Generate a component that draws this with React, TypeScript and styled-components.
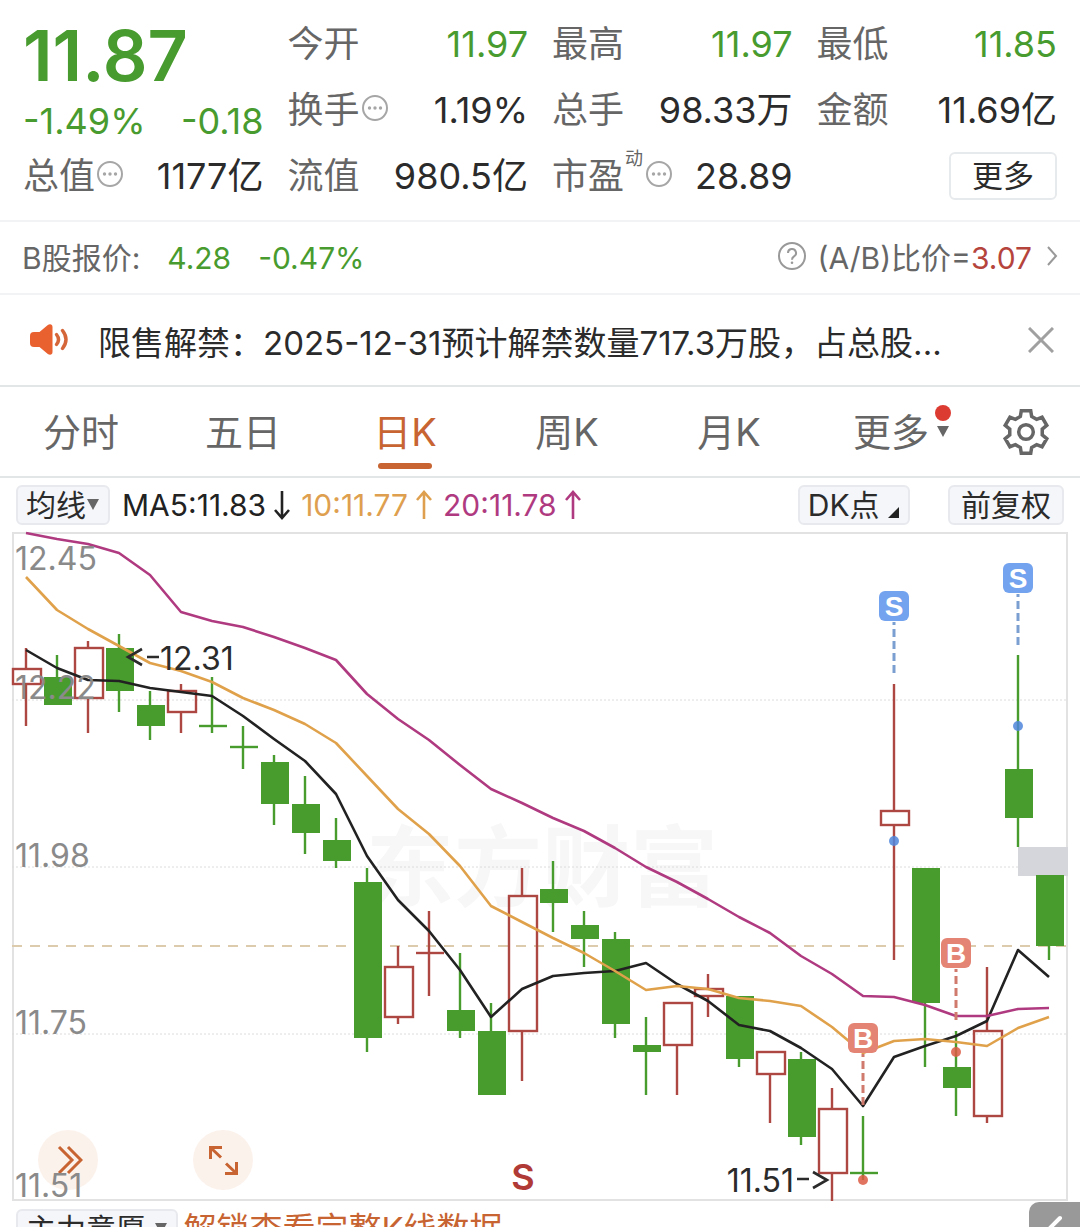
import React from "react";
import styled, { createGlobalStyle, css } from "styled-components";

const GREEN = "#489b2e";
const RED = "#b5443c";
const CANDLE_RED = "#ad4742";
const ORANGE = "#c76432";
const INK = "#2b2b2b";
const MUTED = "#666666";

const GlobalStyle = createGlobalStyle`
  *, *::before, *::after { box-sizing: border-box; }
  body {
    margin: 0;
    background: #ffffff;
    color: ${INK};
    font-family: Inter, "Noto Sans CJK SC", sans-serif;
    font-size: 36px;
  }
  button {
    margin: 0;
    padding: 0;
    border: 0;
    background: none;
    color: inherit;
    font: inherit;
    cursor: pointer;
  }
  a { color: inherit; text-decoration: none; }
  svg { display: block; flex: none; }
`;

const Page = styled.div`
  display: flex;
  flex-direction: column;
  height: 100vh;
  overflow: hidden;
  white-space: nowrap;

  > * {
    flex: none;
  }
`;

/* ---------- quote summary ---------- */

const Summary = styled.section`
  display: grid;
  grid-template-columns: repeat(4, 1fr);
  column-gap: 24px;
  padding: 11px 23px;
  border-bottom: 2px solid #f2f3f4;
`;

const Column = styled.div`
  display: flex;
  flex-direction: column;
  min-width: 0;
`;

const Price = styled.strong`
  height: 89px;
  color: ${GREEN};
  font-size: 70px;
  font-weight: 600;
  line-height: 89px;
`;

const Change = styled.div`
  display: flex;
  justify-content: space-between;
  height: 43px;
  color: ${GREEN};
  line-height: 43px;
`;

const Field = styled.div`
  display: flex;
  align-items: center;
  height: 66px;
  line-height: 66px;

  > svg {
    margin: 0 0 4px 1px;
  }
`;

const FieldName = styled.span`
  color: ${MUTED};
`;

const FieldValue = styled.span<{ $color?: string }>`
  margin-left: auto;
  color: ${(p) => p.$color ?? INK};
`;

const Sup = styled.sup`
  align-self: flex-start;
  margin: 6px 1px 0;
  color: ${MUTED};
  font-size: 18px;
  line-height: 20px;
`;

const MoreButton = styled.button`
  height: 48px;
  margin-left: auto;
  padding: 0 21px;
  border: 2px solid #e7eaec;
  border-radius: 6px;
  font-size: 31px;
  line-height: 44px;
`;

/* ---------- B share row ---------- */

const BShare = styled.section`
  display: flex;
  align-items: center;
  justify-content: space-between;
  height: 73px;
  padding: 0 22px 4px;
  border-bottom: 2px solid #f2f3f4;
  color: ${MUTED};
  font-size: 30px;
`;

const Inline = styled.div`
  display: flex;
  align-items: baseline;
  gap: 27px;
`;

const RatioLink = styled.a`
  display: flex;
  align-items: center;
  gap: 10px;
`;

const Tint = styled.span<{ $color: string }>`
  color: ${(p) => p.$color};
`;

/* ---------- notice ---------- */

const Notice = styled.section`
  display: flex;
  align-items: center;
  height: 92px;
  padding: 0 26px 0 29px;
  border-bottom: 2px solid #e3e6e7;
`;

const NoticeText = styled.p`
  flex: 1;
  min-width: 0;
  margin: 6px 0 0 29px;
  overflow: hidden;
  font-size: 33px;
  line-height: 48px;
`;

/* ---------- period tabs ---------- */

const Tabs = styled.nav`
  display: grid;
  grid-template-columns: repeat(6, 3fr) 2fr;
  height: 91px;
  border-bottom: 2px solid #e3e6e7;
`;

const Tab = styled.button<{ $active?: boolean }>`
  display: flex;
  align-items: center;
  justify-content: center;
  padding-bottom: 4px;
  color: ${MUTED};
  font-size: 38px;
  ${(p) =>
    p.$active &&
    css`
      position: relative;
      color: ${ORANGE};
      &::after {
        content: "";
        position: absolute;
        bottom: 7px;
        left: calc(50% - 27px);
        width: 54px;
        height: 6px;
        border-radius: 3px;
        background: ${ORANGE};
      }
    `}
`;

const SettingsButton = styled.button`
  display: grid;
  place-items: center;
`;

const TabLabel = styled.span`
  position: relative;
`;

const TabMark = styled.svg`
  position: absolute;
  top: 3px;
  left: calc(100% + 5px);
`;

/* ---------- indicator bar ---------- */

const Toolbar = styled.section`
  display: flex;
  align-items: center;
  height: 54px;
  padding: 0 16px;
`;

const Chip = styled.button<{ $wide?: boolean }>`
  display: flex;
  align-items: center;
  height: 40px;
  padding: 0 ${(p) => (p.$wide ? 11 : 8)}px;
  border: 2px solid #e7e9ee;
  border-radius: 6px;
  background: #f5f6f9;
  font-size: 30px;
  line-height: 36px;
`;

const Averages = styled.div`
  display: flex;
  gap: 10px;
  margin-left: 12px;
  font-size: 30px;
`;

const Average = styled.span<{ $color: string }>`
  display: flex;
  align-items: center;
  gap: 7px;
  color: ${(p) => p.$color};
`;

const ChipGroup = styled.div`
  display: flex;
  gap: 38px;
  margin-left: auto;
`;

/* ---------- chart ---------- */

const ChartArea = styled.section`
  position: relative;
  margin: 0 12px;
`;

const Plot = styled.svg`
  position: relative;
  z-index: 1;
  width: 100%;
  height: auto;
  overflow: visible;
  pointer-events: none;
`;

const RoundButton = styled.button<{ $left: number }>`
  position: absolute;
  bottom: 11px;
  left: ${(p) => p.$left}px;
  display: grid;
  place-items: center;
  width: 60px;
  height: 60px;
  border-radius: 50%;
  background: #fcf2ec;
`;

/* ---------- lower panel ---------- */

const Lower = styled.section`
  position: relative;
  display: flex;
  align-items: flex-start;
  gap: 5px;
  padding: 8px 16px;
`;

const Unlock = styled.a`
  color: ${ORANGE};
  font-size: 33px;
  line-height: 40px;
`;

const BackButton = styled.button`
  position: absolute;
  top: 1px;
  right: 0;
  display: grid;
  place-items: center;
  width: 51px;
  height: 50px;
  border-radius: 10px 0 0 0;
  background: #999999;
`;

/* ---------- icons ---------- */

const DotsIcon = () => (
  <svg width="28" height="28" viewBox="0 0 28 28" fill="#a6a6a6" aria-hidden="true">
    <circle cx="14" cy="14" r="12" fill="none" stroke="#a6a6a6" strokeWidth="2" />
    <circle cx="8.500" cy="14" r="1.700" />
    <circle cx="14" cy="14" r="1.700" />
    <circle cx="19.500" cy="14" r="1.700" />
  </svg>
);

const HelpIcon = () => (
  <svg width="30" height="30" viewBox="0 0 30 30" fill="none" stroke="#999" strokeWidth="2" aria-hidden="true">
    <circle cx="15" cy="15" r="13" />
    <path d="M11 12a4 4 0 1 1 6 3.400c-1.500 1-2 1.600-2 3.400" />
    <circle cx="15" cy="21.800" r="1.300" fill="#999" stroke="none" />
  </svg>
);

const ChevronIcon = () => (
  <svg width="16" height="22" viewBox="0 0 16 22" fill="none" stroke="#999" strokeWidth="2" aria-hidden="true">
    <path d="M6 2l8 9-8 9" />
  </svg>
);

const SpeakerIcon = () => (
  <svg width="40" height="34" viewBox="0 0 40 34" aria-hidden="true">
    <path
      d="M5 9h5.500L18.500 2.200c2.500-1.800 5-1 5 1.800v25c0 2.800-2.500 3.600-5 1.800L10.500 24H5c-2.800 0-4-1.200-4-4v-7c0-2.800 1.200-4 4-4z"
      fill="#ea6130"
    />
    <path d="M27.500 11.500q4 5 0 10" fill="none" stroke="#d5663a" strokeWidth="3.400" strokeLinecap="round" />
    <path d="M33.500 7.500q7 9 0 18" fill="none" stroke="#d5663a" strokeWidth="3.400" strokeLinecap="round" />
  </svg>
);

const CloseIcon = () => (
  <svg width="26" height="26" viewBox="0 0 26 26" stroke="#a0a0a0" strokeWidth="3" aria-hidden="true">
    <path d="M1 1l24 24M25 1L1 25" />
  </svg>
);

// six teeth, each one given as [radius, angle from the tooth's axis]
const gearPoints = Array.from({ length: 6 }, (_, k) =>
  [
    [16.5, -20],
    [21.8, -12.5],
    [21.8, 12.5],
    [16.5, 20],
  ].map(([r, a]) => {
    const t = ((k * 60 - 90 + a) * Math.PI) / 180;
    return `${(24 + r * Math.cos(t)).toFixed(2)},${(24 + r * Math.sin(t)).toFixed(2)}`;
  })
)
  .flat()
  .join(" ");

const GearIcon = () => (
  <svg width="48" height="48" viewBox="0 0 48 48" fill="none" stroke={MUTED} strokeWidth="3.500" aria-hidden="true">
    <polygon points={gearPoints} />
    <circle cx="24" cy="24" r="7.300" />
  </svg>
);

const ArrowIcon = ({ up }: { up?: boolean }) => (
  <svg width="18" height="30" viewBox="0 0 18 30" fill="none" stroke="currentColor" strokeWidth="2.600" aria-hidden="true">
    <path d={up ? "M9 29V2M2 10l7-8 7 8" : "M9 1v27M2 20l7 8 7-8"} />
  </svg>
);

const Caret = () => (
  <svg width="14" height="12" viewBox="0 0 14 12" fill="#666" aria-hidden="true">
    <path d="M1 0h12L7 11z" />
  </svg>
);

const CornerMark = () => (
  <svg width="12" height="30" viewBox="0 0 12 30" fill="#222" aria-hidden="true">
    <path d="M11 17v11H0z" />
  </svg>
);

/* ---------- chart data ---------- */

// open, high, low, close
const candles: [number, number, number, number][] = [
  [12.24, 12.29, 12.18, 12.26],
  [12.25, 12.28, 12.21, 12.21],
  [12.22, 12.3, 12.17, 12.29],
  [12.29, 12.31, 12.2, 12.23],
  [12.21, 12.23, 12.16, 12.18],
  [12.2, 12.24, 12.17, 12.23],
  [12.18, 12.25, 12.17, 12.18],
  [12.15, 12.18, 12.12, 12.15],
  [12.13, 12.14, 12.04, 12.07],
  [12.07, 12.11, 12.0, 12.03],
  [12.02, 12.05, 11.98, 11.99],
  [11.96, 11.98, 11.72, 11.74],
  [11.77, 11.87, 11.76, 11.84],
  [11.859, 11.92, 11.8, 11.86],
  [11.78, 11.86, 11.74, 11.75],
  [11.75, 11.79, 11.66, 11.66],
  [11.75, 11.98, 11.68, 11.94],
  [11.95, 11.99, 11.89, 11.93],
  [11.9, 11.92, 11.84, 11.88],
  [11.88, 11.89, 11.74, 11.76],
  [11.73, 11.77, 11.66, 11.72],
  [11.73, 11.79, 11.66, 11.79],
  [11.8, 11.83, 11.77, 11.81],
  [11.8, 11.8, 11.7, 11.71],
  [11.69, 11.72, 11.62, 11.72],
  [11.71, 11.72, 11.59, 11.6],
  [11.55, 11.67, 11.51, 11.64],
  [11.55, 11.63, 11.54, 11.55],
  [12.04, 12.24, 11.85, 12.06],
  [11.98, 11.98, 11.7, 11.79],
  [11.7, 11.75, 11.63, 11.67],
  [11.63, 11.84, 11.62, 11.75],
  [12.12, 12.28, 12.01, 12.05],
  [11.97, 11.97, 11.85, 11.87],
];

const ma5 = [
  650, 668, 680, 681, 688, 692, 696, 716, 739, 761, 794, 856, 900, 931, 970, 1017, 989, 976, 973, 971, 963, 984, 1001,
  1025, 1031, 1048, 1069, 1106, 1057, 1046, 1036, 1021, 950, 977,
];
const ma10 = [
  577, 610, 629, 646, 663, 671, 682, 698, 710, 724, 743, 776, 809, 834, 866, 906, 922, 938, 953, 971, 990, 986, 989,
  998, 1001, 1006, 1027, 1053, 1041, 1039, 1042, 1046, 1028, 1017,
];
const ma20 = [
  533, 539, 544, 553, 575, 612, 621, 627, 637, 648, 660, 694, 719, 740, 765, 789, 803, 818, 831, 848, 867, 882, 899,
  917, 933, 956, 974, 996, 997, 1005, 1016, 1016, 1009, 1008,
];

const xAt = (i: number) => 26 + i * 31;
const yAt = (price: number) => Math.round(946 - (price - 11.87) * 709);
const toPoints = (ys: number[]) => ys.map((y, i) => `${xAt(i)},${y}`).join(" ");

const Candle = ({ index, data }: { index: number; data: [number, number, number, number] }) => {
  const [open, high, low, close] = data;
  const x = xAt(index);
  const top = yAt(Math.max(open, close));
  const bottom = yAt(Math.min(open, close));
  const rising = close > open;
  const color = rising ? CANDLE_RED : "#489c2d";
  const flat = bottom - top < 3;
  return (
    <g stroke={color} strokeWidth="2.400">
      <path d={`M${x} ${yAt(high)}V${top}M${x} ${bottom}V${yAt(low)}`} />
      {flat ? (
        <path d={`M${x - 13} ${top}h28`} />
      ) : rising ? (
        <rect x={x - 13} y={top} width="28" height={bottom - top} fill="none" />
      ) : (
        <rect x={x - 13} y={top} width="28" height={bottom - top} fill={color} stroke="none" />
      )}
    </g>
  );
};

const Signal = ({ x, y, end, dot, kind }: { x: number; y: number; end: number; dot: number; kind: "S" | "B" }) => {
  const sell = kind === "S";
  return (
    <g>
      <path
        d={`M${x} ${end}V${y + 16}`}
        stroke={sell ? "#7a9fd0" : "#cf7a6c"}
        strokeWidth="3"
        strokeDasharray="8 4"
      />
      <circle cx={x} cy={dot} r="5" fill={sell ? "#4f86dc" : "#dc5c44"} fillOpacity="0.85" />
      <rect x={x - 15} y={y - 15} width="30" height="30" rx="6" fill={sell ? "#73a2ee" : "#e38474"} />
      <text x={x} y={y + 10} textAnchor="middle" fontFamily="Liberation Sans, sans-serif" fontWeight="700" fontSize="28" fill="#fff">
        {kind}
      </text>
    </g>
  );
};

const axisLabels: [string, number][] = [
  ["12.45", 570],
  ["12.22", 699],
  ["11.98", 867],
  ["11.75", 1034],
  ["11.51", 1197],
];

const Chart = () => (
  <Plot viewBox="12 532 1056 669" role="img" aria-label="日K">
    <text x="366" y="899" fontSize="88" fontWeight="700" fill="#f7f7f7">
      东方财富
    </text>
    <rect x="13" y="533" width="1054" height="667" fill="none" stroke="#e2e2e2" strokeWidth="2" />
    <path d="M12 700H1068M12 867H1068M12 1034H1068" stroke="#dcdcdc" strokeDasharray="2 2" />
    <path d="M12 946H1068" stroke="#dccbac" strokeWidth="2" strokeDasharray="10 8" />
    <rect x="1018" y="847" width="50" height="29" fill="#d5d6dc" />
    {candles.map((c, i) => (
      <Candle key={i} index={i} data={c} />
    ))}
    <g fill="none" strokeWidth="2.600" strokeLinejoin="round">
      <polyline points={toPoints(ma5)} stroke="#222" />
      <polyline points={toPoints(ma10)} stroke="#e0a14b" />
      <polyline points={toPoints(ma20)} stroke="#b03a80" />
    </g>
    <Signal kind="S" x={894} y={606} end={673} dot={841} />
    <Signal kind="S" x={1018} y={578} end={645} dot={726} />
    <Signal kind="B" x={863} y={1038} end={1105} dot={1180} />
    <Signal kind="B" x={956} y={953} end={1020} dot={1052} />
    <g fontSize="32" fill="#8a8a8a">
      {axisLabels.map(([label, y]) => (
        <text key={label} x="15" y={y}>
          {label}
        </text>
      ))}
    </g>
    <g fontSize="32" fill={INK}>
      <text x="160" y="670">12.31</text>
      <text x="794" y="1192" textAnchor="end">11.51</text>
    </g>
    <g fill="none" stroke={INK} strokeWidth="2.600">
      <path d="M142 649l-14 8 14 8M147 657h12" />
      <path d="M813 1172l14 8-14 8M797 1179h12" />
    </g>
    <text x="523" y="1190" textAnchor="middle" fontSize="36" fontWeight="600" fill="#b03a36">
      S
    </text>
  </Plot>
);

export default function App() {
  return (
    <Page>
      <GlobalStyle />
      <Summary>
        <Column>
          <Price>11.87</Price>
          <Change>
            <span>-1.49%</span>
            <span>-0.18</span>
          </Change>
          <Field>
            <FieldName>总值</FieldName>
            <DotsIcon />
            <FieldValue>1177亿</FieldValue>
          </Field>
        </Column>
        <Column>
          <Field>
            <FieldName>今开</FieldName>
            <FieldValue $color={GREEN}>11.97</FieldValue>
          </Field>
          <Field>
            <FieldName>换手</FieldName>
            <DotsIcon />
            <FieldValue>1.19%</FieldValue>
          </Field>
          <Field>
            <FieldName>流值</FieldName>
            <FieldValue>980.5亿</FieldValue>
          </Field>
        </Column>
        <Column>
          <Field>
            <FieldName>最高</FieldName>
            <FieldValue $color={GREEN}>11.97</FieldValue>
          </Field>
          <Field>
            <FieldName>总手</FieldName>
            <FieldValue>98.33万</FieldValue>
          </Field>
          <Field>
            <FieldName>市盈</FieldName>
            <Sup>动</Sup>
            <DotsIcon />
            <FieldValue>28.89</FieldValue>
          </Field>
        </Column>
        <Column>
          <Field>
            <FieldName>最低</FieldName>
            <FieldValue $color={GREEN}>11.85</FieldValue>
          </Field>
          <Field>
            <FieldName>金额</FieldName>
            <FieldValue>11.69亿</FieldValue>
          </Field>
          <Field>
            <MoreButton type="button">更多</MoreButton>
          </Field>
        </Column>
      </Summary>

      <BShare>
        <Inline>
          <span>B股报价:</span>
          <Tint $color={GREEN}>4.28</Tint>
          <Tint $color={GREEN}>-0.47%</Tint>
        </Inline>
        <RatioLink href="#ratio">
          <HelpIcon />
          <span>
            (A/B)比价=<Tint $color={RED}>3.07</Tint>
          </span>
          <ChevronIcon />
        </RatioLink>
      </BShare>

      <Notice>
        <SpeakerIcon />
        <NoticeText>限售解禁：2025-12-31预计解禁数量717.3万股，占总股...</NoticeText>
        <button type="button" aria-label="关闭">
          <CloseIcon />
        </button>
      </Notice>

      <Tabs>
        <Tab type="button">分时</Tab>
        <Tab type="button">五日</Tab>
        <Tab type="button" $active>
          日K
        </Tab>
        <Tab type="button">周K</Tab>
        <Tab type="button">月K</Tab>
        <Tab type="button">
          <TabLabel>
            更多
            <TabMark width="18" height="34" viewBox="0 0 18 34" aria-hidden="true">
              <circle cx="9" cy="8" r="8" fill="#dc3b32" />
              <path d="M3 21h12L9 32z" fill={MUTED} />
            </TabMark>
          </TabLabel>
        </Tab>
        <SettingsButton type="button" aria-label="设置">
          <GearIcon />
        </SettingsButton>
      </Tabs>

      <Toolbar>
        <Chip type="button">
          均线
          <Caret />
        </Chip>
        <Averages>
          <Average $color="#222222">
            MA5:11.83
            <ArrowIcon />
          </Average>
          <Average $color="#dea04f">
            10:11.77
            <ArrowIcon up />
          </Average>
          <Average $color="#b03a80">
            20:11.78
            <ArrowIcon up />
          </Average>
        </Averages>
        <ChipGroup>
          <Chip type="button">
            DK点&nbsp;
            <CornerMark />
          </Chip>
          <Chip type="button" $wide>
            前复权
          </Chip>
        </ChipGroup>
      </Toolbar>

      <ChartArea>
        <RoundButton type="button" $left={26} aria-label="快进">
          <svg width="30" height="32" viewBox="0 0 30 32" fill="none" stroke={ORANGE} strokeWidth="3" aria-hidden="true">
            <path d="M6 3l13 13L6 29M15 3l13 13-13 13" />
          </svg>
        </RoundButton>
        <RoundButton type="button" $left={181} aria-label="全屏">
          <svg width="30" height="30" viewBox="0 0 30 30" fill="none" stroke={ORANGE} strokeWidth="3" aria-hidden="true">
            <path d="M2.500 14V2.500H14M2.500 2.500L13 12.500M28.500 17v11.500H17M28.500 28.500L18 18.500" />
          </svg>
        </RoundButton>
        <Chart />
      </ChartArea>

      <Lower>
        <Chip type="button">
          主力意愿&nbsp;
          <Caret />
        </Chip>
        <Unlock href="#unlock">解锁查看完整K线数据</Unlock>
        <BackButton type="button" aria-label="返回">
          <svg width="16" height="24" viewBox="0 0 16 24" fill="none" stroke="#fff" strokeWidth="4" strokeLinecap="round" aria-hidden="true">
            <path d="M13 3L4 12l9 9" />
          </svg>
        </BackButton>
      </Lower>
    </Page>
  );
}
